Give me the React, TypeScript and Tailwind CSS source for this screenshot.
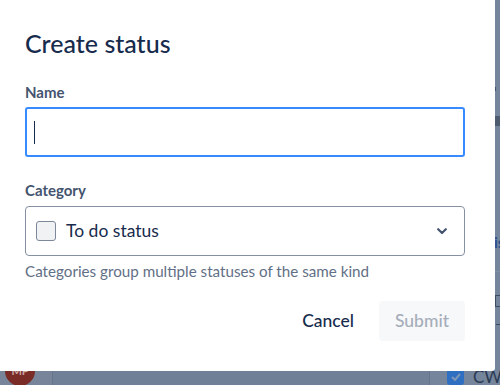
// Create status dialog over a dimmed board page

const font = "font-['Lato','Noto_Sans',sans-serif]";

function Backdrop() {
  return (
    <div className="flex h-full w-full">
      <div className="w-[53px] h-full bg-[#77849a] border-r border-[#66758b] pt-[356px] pl-[5px]">
        <div className="w-[30px] h-[30px] rounded-full bg-[#7b2b26] flex items-center justify-center text-[11px] font-bold text-[#c9a8a6]">
          MP
        </div>
      </div>
      <div className="flex-1 h-full bg-[#6f8097]" />
      <div className="w-[71px] h-full bg-[#75859b] border-l border-[#66758b] flex flex-col">
        <div className="h-[87px]" />
        <div className="ml-[64px] w-[2px] h-[4px] bg-[#46536a]" />
        <div className="h-[26px]" />
        <div className="ml-[65px] h-[10px] bg-[#4f5c70]" />
        <div className="h-[109px]" />
        <div className="ml-[64px] text-[15px] leading-[14px] font-bold text-[#2c4f93]">is</div>
        <div className="h-[22px]" />
        <div className="ml-[65px] h-px bg-[#8290a4]" />
        <div className="h-[24px]" />
        <div className="ml-[65px] h-[12px] border border-[#3e4a5e] border-r-0" />
        <div className="h-[17px]" />
        <div className="ml-[66px] w-[4px] h-px bg-[#3e4a5e]" />
        <div className="h-[43px]" />
        <div className="flex items-center gap-[9px] pl-[17px]">
          <div className="shrink-0 w-[17px] h-[17px] rounded-[3px] bg-[#2f6fc2] flex items-center justify-center">
            <svg width="10" height="8" viewBox="0 0 10 8" fill="none">
              <path d="M1 4l3 3 5-6" stroke="#7f96b5" strokeWidth="2" />
            </svg>
          </div>
          <span className="text-[17px] text-[#2b3a55] leading-none whitespace-nowrap">CW-</span>
        </div>
      </div>
    </div>
  );
}

function Chevron() {
  return (
    <svg width="10" height="7" viewBox="0 0 10 7" fill="none">
      <path d="M1.2 1.2L5 5l3.8-3.8" stroke="#44546f" strokeWidth="2.2" strokeLinecap="round" strokeLinejoin="round" />
    </svg>
  );
}

export default function App() {
  return (
    <div className={`relative w-[500px] h-[385px] overflow-hidden ${font}`}>
      <Backdrop />
      <div className="absolute inset-0">
        <div className="w-[495px] h-[371px] bg-white rounded-br-[3px] px-[25px] pt-[28px]">
          <h1 className="text-[25px] leading-[30px] font-medium text-[#172b4d]">Create status</h1>

          <label className="block mt-[24px] text-[15px] leading-[20px] font-bold text-[#44546f]">Name</label>
          <div className="mt-[5px] w-[440px] h-[50px] rounded-[3px] border-2 border-[#388bff] flex items-center pl-[7px]">
            <span className="w-px h-[23px] bg-[#172b4d]" />
          </div>

          <label className="block mt-[23px] text-[15px] leading-[20px] font-bold text-[#44546f]">Category</label>
          <div className="mt-[6px] w-[440px] h-[50px] rounded-[4px] border border-[#8590a2] flex items-center pl-[10px] pr-[17px]">
            <span className="w-[20px] h-[20px] rounded-[3px] border border-[#7d889b] bg-[#f1f2f4]" />
            <span className="ml-[10px] flex-1 text-[17.5px] text-[#172b4d]">To do status</span>
            <Chevron />
          </div>
          <p className="mt-[5px] text-[15.2px] leading-[20px] text-[#626f86]">
            Categories group multiple statuses of the same kind
          </p>

          <div className="mt-[20px] flex justify-end gap-[10px] pr-[5px]">
            <button className="h-[40px] px-[15px] rounded-[3px] text-[17.5px] font-medium text-[#172b4d]">Cancel</button>
            <button disabled className="h-[40px] w-[86px] rounded-[4px] bg-[#f7f8f9] text-[17.5px] font-medium text-[#a5adba]">
              Submit
            </button>
          </div>
        </div>
      </div>
    </div>
  );
}
